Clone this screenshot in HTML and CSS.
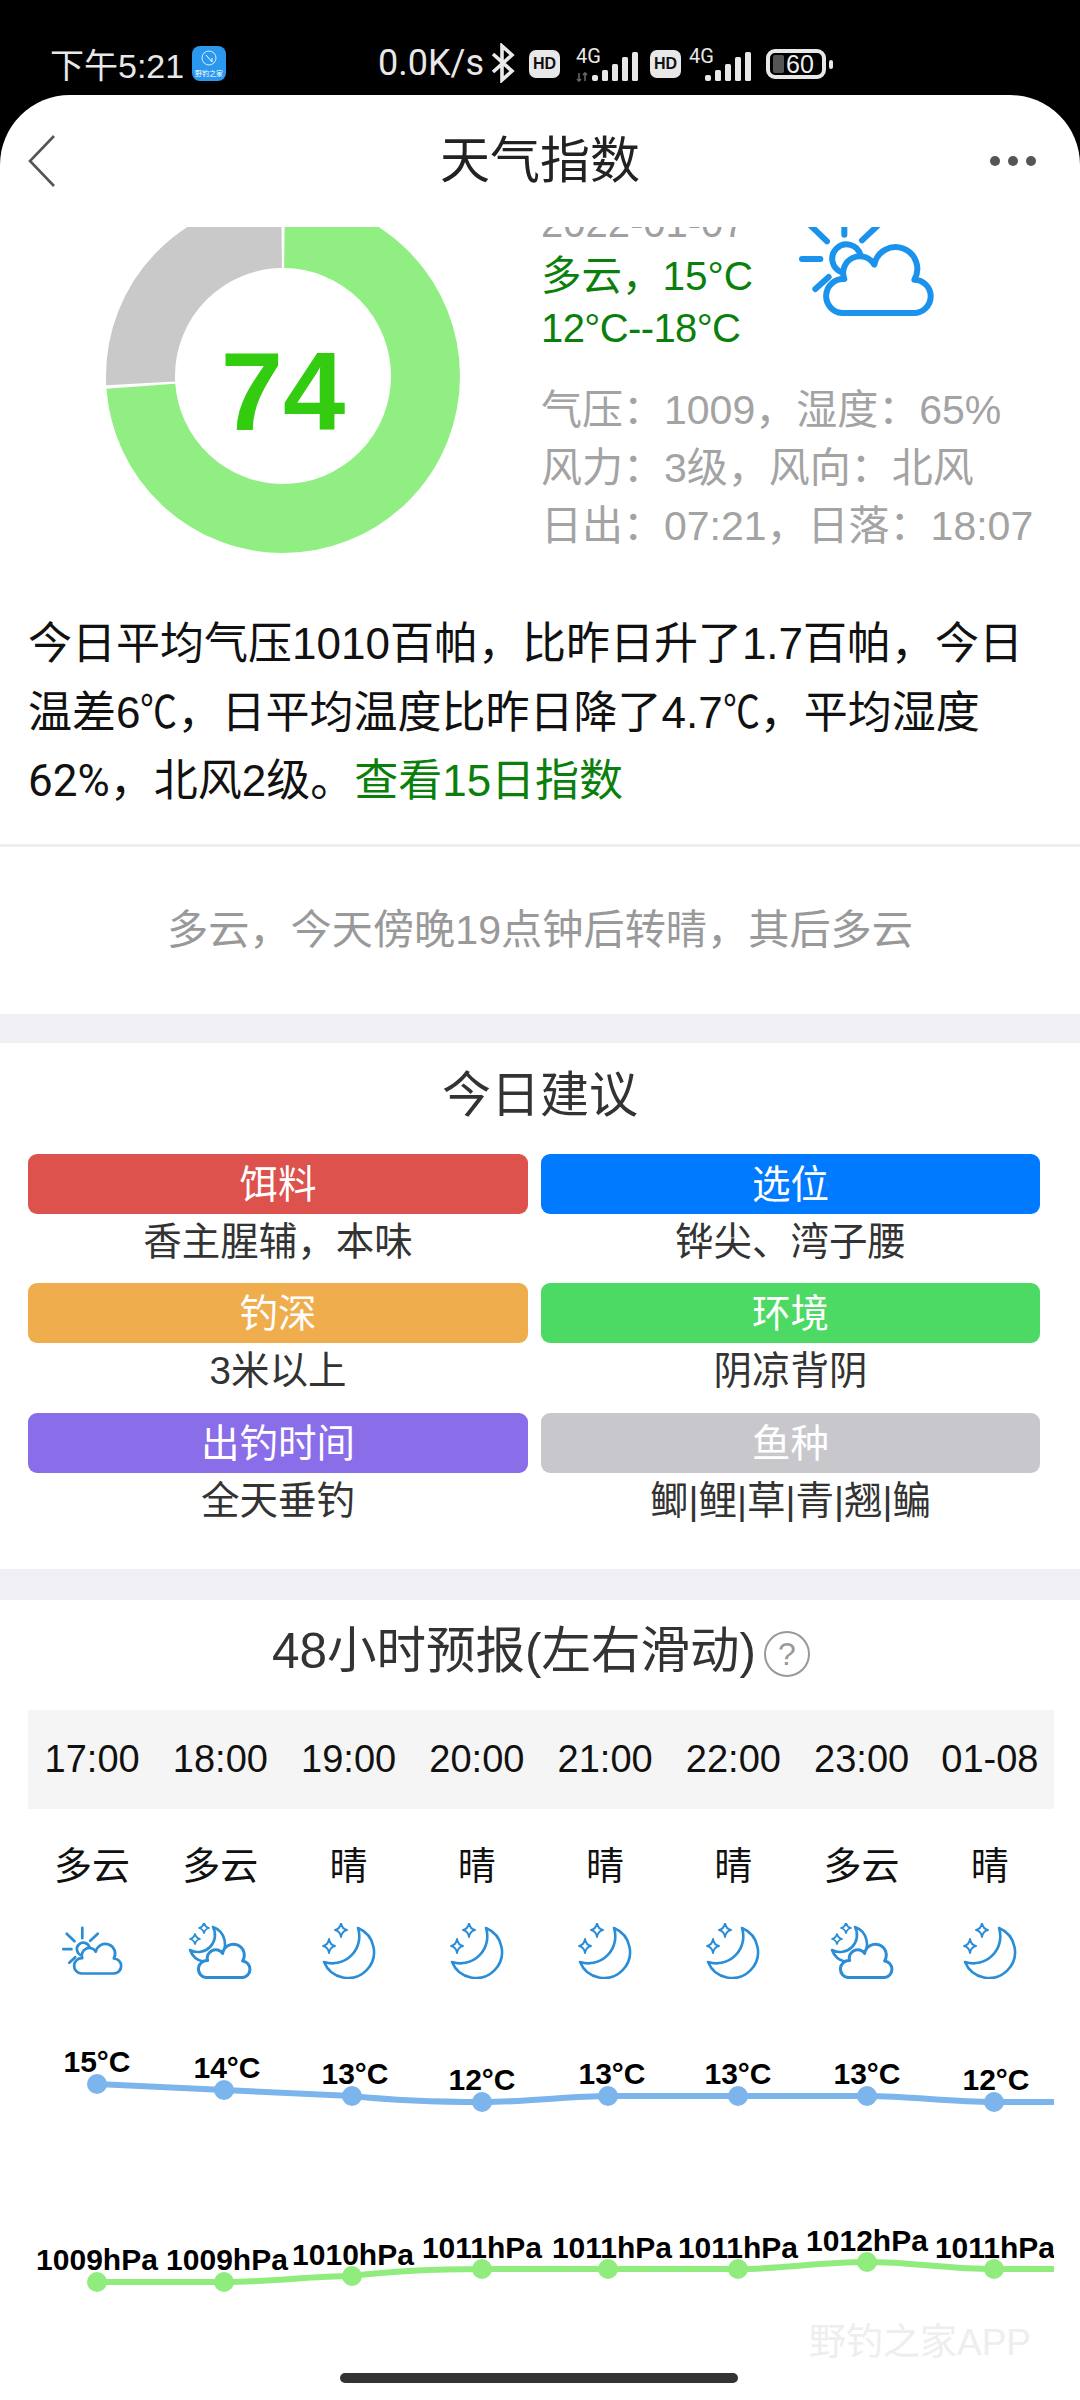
FILE: index.html
```html
<!DOCTYPE html>
<html lang="zh-CN">
<head>
<meta charset="utf-8">
<title>天气指数</title>
<link rel="stylesheet" href="styles.css">
</head>
<body>
<svg class="defs" width="0" height="0">
  <defs>
    <symbol id="sun-cloud" viewBox="80 25 420 330">
      <g fill="none" stroke="currentColor" stroke-width="18" stroke-linecap="round">
        <path d="M118 75L170 125M222 35V105M275 122L325 75M95 178H150M135 268L175 232"/>
        <path d="M215 218A43 43 0 1 1 270 165"/>
        <path stroke-linejoin="round" d="M215 340H430A50 50 0 0 0 432 240A65 65 0 1 0 312 195A50 50 0 0 0 222 238A51 51 0 0 0 215 340Z"/>
      </g>
    </symbol>
    <symbol id="moon" viewBox="0 0 64 56">
      <g fill="none" stroke="currentColor" stroke-width="2.6" stroke-linejoin="round">
        <path d="M41 5A26 26 0 1 1 7 39A27 27 0 0 0 41 5Z"/>
        <path stroke-width="1.9" d="M24 0Q25 6 30 7Q25 8 24 14Q23 8 18 7Q23 6 24 0Z"/>
        <path stroke-width="1.9" d="M12 16Q13 22 18 23Q13 24 12 30Q11 24 6 23Q11 22 12 16Z"/>
      </g>
    </symbol>
    <symbol id="moon-cloud" viewBox="0 0 68 56">
      <g fill="none" stroke="currentColor" stroke-linejoin="round">
        <path stroke-width="2.6" d="M27 4A18 18 0 1 1 4 27A17 17 0 0 0 27 4Z"/>
        <path stroke-width="1.8" d="M18 0Q19 4 23 5Q19 6 18 10Q17 6 13 5Q17 4 18 0Z"/>
        <path stroke-width="1.8" d="M9 11Q10 15 14 16Q10 17 9 21Q8 17 4 16Q8 15 9 11Z"/>
        <path class="cloud-fill" stroke-width="3" d="M20.400 54.600H56.300A8.400 8.400 0 0 0 56.600 37.900A10.900 10.900 0 1 0 36.600 30.400A8.400 8.400 0 0 0 21.600 37.500A8.500 8.500 0 0 0 20.400 54.600Z"/>
      </g>
    </symbol>
  </defs>
</svg>

<header class="status">
  <span class="clock">下午5:21</span>
  <span class="app-icon">
    <svg class="app-glyph" viewBox="0 0 20 20" width="20" height="20"><circle cx="10" cy="9" r="7" fill="none" stroke="#d8eeff" stroke-width="1"/><path d="M7 6L13 13V9" fill="none" stroke="#fff" stroke-width="1"/></svg>
    <span class="app-name">野钓之家</span>
  </span>
  <span class="speed">0.0K/s</span>
  <svg class="bt" viewBox="0 0 25 40" width="25" height="40"><path d="M3 11L22 28L12 37V3L22 12L3 29" fill="none" stroke="#eaeaea" stroke-width="3.600"/></svg>
  <span class="hd">HD</span>
  <svg class="signal" viewBox="0 -5 64 39" width="64" height="39">
    <text class="net" x="0" y="15">4G</text>
    <path d="M3 25V33M1 31L3 33L5 31M9 33V25M7 27L9 25L11 27" fill="none" stroke="#666" stroke-width="1.600"/>
    <rect x="16" y="27" width="6" height="6" rx="2"/><rect x="26" y="22" width="6" height="11" rx="1.500"/><rect x="36" y="16" width="6" height="17" rx="1.500"/><rect x="46" y="9" width="6" height="24" rx="1.500"/><rect x="56" y="4" width="6" height="29" rx="1.500"/>
  </svg>
  <span class="hd hd-second">HD</span>
  <svg class="signal signal-second" viewBox="0 -5 64 39" width="64" height="39">
    <text class="net" x="0" y="15">4G</text>
    <rect x="16" y="27" width="6" height="6" rx="2"/><rect x="26" y="22" width="6" height="11" rx="1.500"/><rect x="36" y="16" width="6" height="17" rx="1.500"/><rect x="46" y="9" width="6" height="24" rx="1.500"/><rect x="56" y="4" width="6" height="29" rx="1.500"/>
  </svg>
  <span class="battery"><span class="battery-fill"></span><span class="battery-num">60</span></span>
  <span class="battery-nub"></span>
</header>

<main class="card">
  <nav class="nav">
    <svg class="back" viewBox="0 0 27 52" width="27" height="52"><path d="M26 1L2 26L26 51" fill="none" stroke="#555" stroke-width="2.600"/></svg>
    <h1 class="nav-title">天气指数</h1>
    <div class="more"><span></span><span></span><span></span></div>
  </nav>

  <div class="viewport">
    <div class="scroller">
      <section class="hero">
        <div class="donut">
          <svg viewBox="0 0 354 354" width="354" height="354">
            <g transform="rotate(-90 177 177)" fill="none" stroke-width="69">
              <circle cx="177" cy="177" r="142.500" pathLength="100" stroke="#90ee82" stroke-dasharray="73.670 26.330" stroke-dashoffset="-0.170"/>
              <circle cx="177" cy="177" r="142.500" pathLength="100" stroke="#c9c9c9" stroke-dasharray="25.670 74.330" stroke-dashoffset="-74.170"/>
            </g>
          </svg>
          <span class="score">74</span>
        </div>
        <div class="weather">
          <div class="weather-top">
            <div class="weather-main">
              <div class="date">2022-01-07</div>
              <div class="cond cond-first">多云，15°C</div>
              <div class="cond cond-range">12°C--18°C</div>
            </div>
            <svg class="big-icon" width="140" height="110"><use href="#sun-cloud"/></svg>
          </div>
          <ul class="stats">
            <li>气压：1009，湿度：65%</li>
            <li>风力：3级，风向：北风</li>
            <li>日出：07:21，日落：18:07</li>
          </ul>
        </div>
      </section>

      <p class="summary">今日平均气压1010百帕，比昨日升了1.7百帕，今日温差6<span class="deg">℃</span>，日平均温度比昨日降了4.7<span class="deg">℃</span>，平均湿度<span class="narrow-num">62%</span>，北风2级。<a class="link">查看15日指数</a></p>

      <p class="note">多云，今天傍晚19点钟后转晴，其后多云</p>

      <section class="advice">
        <h2 class="section-title advice-title">今日建议</h2>
        <div class="tags">
          <div class="tag-item"><div class="tag tag-red">饵料</div><div class="tag-text">香主腥辅，本味</div></div>
          <div class="tag-item"><div class="tag tag-blue">选位</div><div class="tag-text">铧尖、湾子腰</div></div>
          <div class="tag-item"><div class="tag tag-orange">钓深</div><div class="tag-text">3米以上</div></div>
          <div class="tag-item"><div class="tag tag-green">环境</div><div class="tag-text">阴凉背阴</div></div>
          <div class="tag-item"><div class="tag tag-purple">出钓时间</div><div class="tag-text">全天垂钓</div></div>
          <div class="tag-item"><div class="tag tag-gray">鱼种</div><div class="tag-text">鲫|鲤|草|青|翘|鳊</div></div>
        </div>
      </section>

      <section class="forecast">
        <div class="forecast-head">
          <h2 class="section-title forecast-title">48小时预报(左右滑动)</h2>
          <span class="help">?</span>
        </div>
        <div class="hours hours-time">
          <span>17:00</span><span>18:00</span><span>19:00</span><span>20:00</span><span>21:00</span><span>22:00</span><span>23:00</span><span>01-08</span>
        </div>
        <div class="hours hours-cond">
          <span>多云</span><span>多云</span><span>晴</span><span>晴</span><span>晴</span><span>晴</span><span>多云</span><span>晴</span>
        </div>
        <div class="hours hours-icon">
          <svg class="i-sun" width="63" height="50"><use href="#sun-cloud"/></svg>
          <svg class="i-mc" width="68" height="56"><use href="#moon-cloud"/></svg>
          <svg class="i-m" width="64" height="56"><use href="#moon"/></svg>
          <svg class="i-m" width="64" height="56"><use href="#moon"/></svg>
          <svg class="i-m" width="64" height="56"><use href="#moon"/></svg>
          <svg class="i-m" width="64" height="56"><use href="#moon"/></svg>
          <svg class="i-mc" width="68" height="56"><use href="#moon-cloud"/></svg>
          <svg class="i-m" width="64" height="56"><use href="#moon"/></svg>
        </div>
        <svg class="chart" viewBox="28 1985 1026 320" width="1026" height="320">
          <path class="line-temp" d="M97 2084L224 2090L352 2096C400 2101 440 2102 482 2102C530 2102 570 2096 608 2096H867C910 2096 950 2102 994 2102H1054"/>
          <g class="dot-temp"><circle cx="97" cy="2084" r="10"/><circle cx="224" cy="2090" r="10"/><circle cx="352" cy="2096" r="10"/><circle cx="482" cy="2102" r="10"/><circle cx="608" cy="2096" r="10"/><circle cx="738" cy="2096" r="10"/><circle cx="867" cy="2096" r="10"/><circle cx="994" cy="2102" r="10"/></g>
          <g class="lbl">
            <text x="97" y="2072">15°C</text><text x="227" y="2078">14°C</text><text x="355" y="2084">13°C</text><text x="482" y="2090">12°C</text><text x="612" y="2084">13°C</text><text x="738" y="2084">13°C</text><text x="867" y="2084">13°C</text><text x="996" y="2090">12°C</text>
          </g>
          <path class="line-press" d="M97 2282H224C270 2282 310 2276 352 2276C400 2270 440 2269 482 2269H738C780 2269 820 2262 867 2262C910 2262 950 2269 994 2269H1054"/>
          <g class="dot-press"><circle cx="97" cy="2282" r="10"/><circle cx="224" cy="2282" r="10"/><circle cx="352" cy="2276" r="10"/><circle cx="482" cy="2269" r="10"/><circle cx="608" cy="2269" r="10"/><circle cx="738" cy="2269" r="10"/><circle cx="867" cy="2262" r="10"/><circle cx="994" cy="2269" r="10"/></g>
          <g class="lbl">
            <text x="97" y="2270">1009hPa</text><text x="227" y="2270">1009hPa</text><text x="353" y="2265">1010hPa</text><text x="482" y="2258">1011hPa</text><text x="612" y="2258">1011hPa</text><text x="738" y="2258">1011hPa</text><text x="867" y="2251">1012hPa</text><text x="995" y="2258">1011hPa</text>
          </g>
        </svg>
      </section>
    </div>
  </div>
  <div class="watermark">野钓之家APP</div>
  <div class="home-bar"></div>
</main>
</body>
</html>
```

FILE: styles.css
```css
* { box-sizing: border-box; }
html, body { margin: 0; padding: 0; background: #000; }
body {
  width: 1080px;
  height: 2400px;
  overflow: hidden;
  font-family: "Liberation Sans", "Noto Sans CJK SC", sans-serif;
  color: #111;
}
h1, h2, p, ul { margin: 0; padding: 0; font-weight: 400; }
ul { list-style: none; }
.defs { position: absolute; }

/* status bar */
.status {
  height: 95px;
  padding: 31px 0 0 50px;
  display: flex;
  align-items: center;
  color: #e8e8e8;
  background: #000;
}
.clock { font-size: 34px; width: 142px; white-space: nowrap; }
.app-icon {
  flex: none;
  width: 34px;
  height: 35px;
  border-radius: 8px;
  background: #2a98ee;
  display: flex;
  flex-direction: column;
  align-items: center;
  overflow: hidden;
}
.app-glyph { margin-top: 3px; }
.app-name { font-size: 7px; line-height: 9px; color: #fff; white-space: nowrap; }
.speed { flex: none; font-family: Roboto, "Liberation Sans", sans-serif; font-size: 36px; margin-left: 152px; width: 112px; white-space: nowrap; }
.bt { flex: none; }
.hd {
  flex: none;
  width: 31px;
  height: 28px;
  margin: 2px 0 0 14px;
  border-radius: 7px;
  background: #e8e8e8;
  color: #111;
  font-size: 16px;
  font-weight: 700;
  line-height: 28px;
  text-align: center;
}
.hd-second { margin-left: 10px; }
.signal { flex: none; margin: -1px 0 0 16px; fill: #e8e8e8; }
.signal-second { margin-left: 8px; }
.net { font-family: Roboto, "Liberation Sans", sans-serif; font-size: 20px; }
.battery {
  flex: none;
  display: flex;
  align-items: center;
  width: 60px;
  height: 30px;
  margin: 2px 0 0 13px;
  padding: 0 3px;
  border: 4px solid #e8e8e8;
  border-radius: 9px;
}
.battery-fill { flex: none; width: 11px; height: 18px; border-radius: 2px; background: #555; }
.battery-num { font-size: 25px; line-height: 22px; color: #eee; margin-left: 2px; }
.battery-nub { flex: none; width: 4px; height: 9px; margin: 2px 0 0 3px; border-radius: 2px; background: #e8e8e8; }

/* card and header */
.card {
  position: relative;
  height: 2305px;
  background: #fff;
  border-radius: 70px 70px 0 0;
  overflow: hidden;
}
.nav {
  height: 132px;
  display: grid;
  grid-template-columns: 1fr auto 1fr;
  align-items: center;
}
.back { margin-left: 28px; }
.nav-title { font-size: 50px; color: #222; line-height: 60px; }
.more { justify-self: end; display: flex; gap: 8px; margin-right: 44px; }
.more span { width: 10px; height: 10px; border-radius: 50%; background: #555; }

.viewport { height: 2173px; overflow: hidden; }
.scroller { margin-top: -30px; }

/* hero */
.hero { display: flex; height: 413px; }
.donut {
  flex: none;
  display: grid;
  width: 354px;
  height: 354px;
  margin: 2px 0 0 106px;
  place-items: center;
}
.donut svg, .score { grid-area: 1 / 1; }
.score {
  padding-top: 32px;
  font-size: 112px;
  font-weight: 700;
  line-height: 108px;
  color: #33cc11;
}
.weather { margin-left: 81px; font-size: 40px; }
.weather-top { display: flex; }
.weather-main { width: 256px; flex: none; white-space: nowrap; }
.date { line-height: 52px; color: #a0a0a0; }
.cond { line-height: 52px; color: #0b7f0b; }
.cond-first { margin-top: 1px; font-size: 40.500px; }
.cond-range { letter-spacing: -0.6px; }
.big-icon { flex: none; margin-top: 11px; color: #1b93ec; }
.stats { margin-top: 27px; font-size: 41px; color: #a3a3a3; white-space: nowrap; }
.stats li { line-height: 58px; }

/* summary */
.summary {
  padding: 0 28px 28px;
  font-size: 44px;
  line-height: 68.500px;
  color: #111;
  border-bottom: 3px solid #eeeeee;
}
.deg {
  display: inline-block;
  width: 37px;
  line-height: 1;
  transform: scaleX(0.84);
  transform-origin: 0 50%;
}
.narrow-num { font-family: Roboto, "Liberation Sans", sans-serif; line-height: 0; }
.link { color: #0b7f0b; }
.note {
  height: 167px;
  font-size: 41.200px;
  line-height: 167px;
  text-align: center;
  color: #999;
  border-bottom: 29px solid #efeff4;
  box-sizing: content-box;
}

/* advice */
.section-title { font-size: 49px; color: #333; line-height: 102px; text-align: center; }
.advice-title { padding-top: 2px; line-height: 100px; }
.advice { padding: 0 0 40px; border-bottom: 31px solid #efeff4; }
.tags {
  margin: 9px 0 0 28px;
  display: grid;
  grid-template-columns: 500px 499px;
  column-gap: 13px;
  row-gap: 13.500px;
}
.tag-item { height: 116px; text-align: center; font-size: 38.500px; }
.tag { height: 60px; border-radius: 9px; line-height: 62px; color: #fff; }
.tag-text { line-height: 56px; color: #333; }
.tag-red { background: #dd524d; }
.tag-blue { background: #007aff; }
.tag-orange { background: #f0ad4e; }
.tag-green { background: #4cd964; }
.tag-purple { background: #8a6de9; }
.tag-gray { background: #c8c7cc; }

/* forecast */
.forecast { padding: 0 26px 0 28px; }
.forecast-head { display: flex; justify-content: center; align-items: center; gap: 8px; }
.forecast-title { font-size: 49.500px; }
.help {
  width: 46px;
  height: 46px;
  margin-top: 6px;
  border: 2px solid #999;
  border-radius: 50%;
  font-size: 32px;
  line-height: 42px;
  text-align: center;
  color: #999;
}
.hours { display: grid; grid-template-columns: repeat(8, 1fr); justify-items: center; align-items: center; }
.hours-time { margin-top: 8px; height: 99px; background: #f5f5f5; font-size: 38px; color: #111; }
.hours-cond { height: 108px; font-size: 38px; color: #111; }
.hours-icon { height: 68px; color: #2b8dd6; }
.cloud-fill { fill: #fff; }
.chart { display: block; }
.line-temp, .line-press { fill: none; stroke-width: 6; stroke-linecap: butt; stroke-linejoin: round; }
.line-temp { stroke: #7cb5ec; }
.line-press { stroke: #90ed7d; }
.dot-temp { fill: #7cb5ec; }
.dot-press { fill: #90ed7d; }
.lbl { font-size: 30px; font-weight: 700; fill: #000; text-anchor: middle; }

/* overlays */
.watermark {
  position: absolute;
  left: 809px;
  top: 2225px;
  font-size: 37px;
  line-height: 46px;
  color: #eeeeee;
  white-space: nowrap;
}
.home-bar {
  position: absolute;
  left: 340px;
  top: 2278px;
  width: 398px;
  height: 10px;
  border-radius: 5px;
  background: #333;
}
```
